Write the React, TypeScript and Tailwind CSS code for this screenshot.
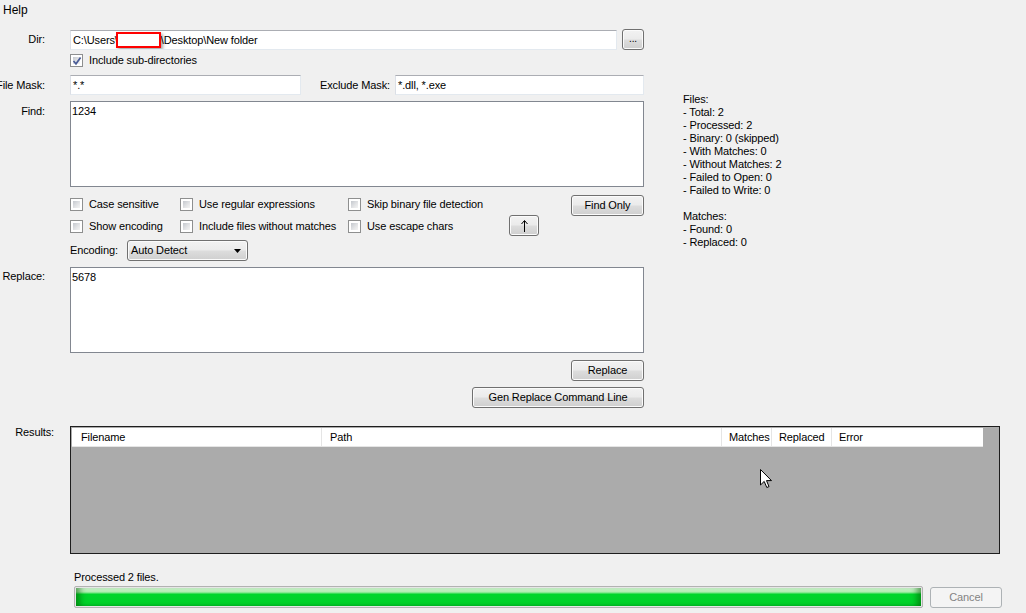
import React from "react";

const Check = ({ checked = false }: { checked?: boolean }) => (
  <span className="relative inline-flex w-[13px] h-[13px] shrink-0 border border-[#8e8f8f] bg-white p-[2px]">
    <span className="block w-full h-full bg-[linear-gradient(135deg,#c4c8ce_0%,#e4e5e7_60%,#f4f4f4_100%)]" />
    {checked && (
      <svg className="absolute left-[1px] top-[1px]" width="10" height="10" viewBox="0 0 10 10">
        <path d="M1.5 5 L4 7.8 L8.6 1.5" fill="none" stroke="#4a5c97" strokeWidth="1.7" />
      </svg>
    )}
  </span>
);

const CheckItem = ({ label, w, checked }: { label: string; w?: string; checked?: boolean }) => (
  <div className={`flex items-center gap-[6px] ${w ?? ""}`}>
    <Check checked={checked} />
    <span className="whitespace-nowrap">{label}</span>
  </div>
);

const Btn = ({ children, cls = "" }: { children: React.ReactNode; cls?: string }) => (
  <div
    className={`flex items-center justify-center h-[21px] border border-[#707070] rounded-[3px] bg-[linear-gradient(#f2f2f2_0%,#ebebeb_48%,#dddddd_52%,#cfcfcf_100%)] shadow-[inset_0_0_0_1px_#fbfbfb] whitespace-nowrap ${cls}`}
  >
    {children}
  </div>
);

const Label = ({ text, w = "w-[45px]", cls = "" }: { text: string; w?: string; cls?: string }) => (
  <div className={`${w} shrink-0 flex justify-end whitespace-nowrap ${cls}`}>
    <span>{text}</span>
  </div>
);

const inputCls =
  "h-[20px] bg-white border border-[#e3e9ef] border-t-[#abadb3] border-l-[#dbdfe6] flex items-center pl-[2px] whitespace-nowrap overflow-hidden";

export default function App() {
  const stats = [
    "Files:",
    "- Total: 2",
    "- Processed: 2",
    "- Binary: 0 (skipped)",
    "- With Matches: 0",
    "- Without Matches: 2",
    "- Failed to Open: 0",
    "- Failed to Write: 0",
    "\u00a0",
    "Matches:",
    "- Found: 0",
    "- Replaced: 0",
  ];
  return (
    <div
      className="w-[1026px] h-[613px] overflow-hidden bg-[#f0f0f0] text-black text-[11px] leading-[13px] tracking-[-0.12px]"
      style={{ fontFamily: '"Liberation Sans", Arial, sans-serif' }}
    >
      {/* menu bar */}
      <div className="h-[20px] pl-[3px] text-[12px] leading-[20px] tracking-normal">Help</div>

      {/* top section */}
      <div className="flex">
        <div className="w-[644px] shrink-0 pt-[10px] flex flex-col">
          {/* Dir */}
          <div className="flex items-start">
            <Label text="Dir:" cls="pt-[3px]" />
            <div className="ml-[25px] flex-1 flex items-start">
              <div className={`${inputCls} flex-1`}>
                <span>C:\Users\</span>
                <span className="inline-block ml-[-2px] w-[45px] h-[16px] border-2 border-[#ff0000] bg-white shadow-[2px_2px_3px_rgba(0,0,0,0.35)]" />
                <span>\Desktop\New folder</span>
              </div>
              <Btn cls="ml-[5px] w-[22px] mt-[-1px] text-[10px] leading-[10px] pb-[1px]">...</Btn>
            </div>
          </div>
          {/* include sub dirs */}
          <div className="mt-[4px] ml-[70px]">
            <CheckItem label="Include sub-directories" checked />
          </div>
          {/* File Mask */}
          <div className="mt-[8px] flex items-start">
            <Label text="File Mask:" cls="pt-[4px]" />
            <div className="ml-[25px] flex-1 flex items-start">
              <div className={`${inputCls} w-[231px]`}>*.*</div>
              <div className="ml-[19px] w-[75px] pt-[4px] whitespace-nowrap">Exclude Mask:</div>
              <div className={`${inputCls} flex-1`}>*.dll, *.exe</div>
            </div>
          </div>
          {/* Find */}
          <div className="mt-[6px] flex items-start">
            <Label text="Find:" cls="pt-[4px]" />
            <div className="ml-[25px] flex-1 h-[86px] bg-white border border-[#828790] pl-[1px] pt-[3px]">1234</div>
          </div>
          {/* options */}
          <div className="ml-[70px] mt-[8px] flex flex-col">
            <div className="h-[20px] flex items-start">
              <div className="flex mt-[3px]">
                <CheckItem label="Case sensitive" w="w-[110px]" />
                <CheckItem label="Use regular expressions" w="w-[168px]" />
                <CheckItem label="Skip binary file detection" />
              </div>
              <Btn cls="ml-auto w-[73px]">Find Only</Btn>
            </div>
            <div className="h-[21px] flex items-start">
              <div className="flex mt-[5px]">
                <CheckItem label="Show encoding" w="w-[110px]" />
                <CheckItem label="Include files without matches" w="w-[168px]" />
                <CheckItem label="Use escape chars" w="w-[161px]" />
              </div>
              <Btn cls="w-[30px]">
                <svg width="7" height="12" viewBox="0 0 7 12">
                  <path d="M3.5 1 V12" stroke="#000" strokeWidth="1" fill="none" />
                  <path d="M0.5 4 L3.5 0.5 L6.5 4" stroke="#000" strokeWidth="1" fill="none" />
                </svg>
              </Btn>
            </div>
            <div className="mt-[4px] flex items-center">
              <div className="w-[57px]">Encoding:</div>
              <div className="w-[121px] h-[21px] border border-[#707070] rounded-[3px] bg-[linear-gradient(#f2f2f2_0%,#ebebeb_48%,#dddddd_52%,#cfcfcf_100%)] shadow-[inset_0_0_0_1px_#fbfbfb] flex items-center pl-[3px] pr-[6px]">
                <span className="flex-1">Auto Detect</span>
                <svg width="7" height="4" viewBox="0 0 7 4">
                  <path d="M0 0 H7 L3.5 4 Z" fill="#000" />
                </svg>
              </div>
            </div>
          </div>
          {/* Replace */}
          <div className="mt-[6px] flex items-start">
            <Label text="Replace:" cls="pt-[3px]" />
            <div className="ml-[25px] flex-1 h-[86px] bg-white border border-[#828790] pl-[1px] pt-[3px]">5678</div>
          </div>
          <div className="mt-[7px] flex justify-end">
            <Btn cls="w-[73px]">Replace</Btn>
          </div>
          <div className="mt-[6px] flex justify-end">
            <Btn cls="w-[172px]">Gen Replace Command Line</Btn>
          </div>
        </div>

        {/* stats */}
        <div className="ml-[39px] pt-[73px] flex flex-col">
          {stats.map((s, i) => (
            <div key={i} className="leading-[13px] whitespace-nowrap">
              {s}
            </div>
          ))}
        </div>
      </div>

      {/* results */}
      <div className="mt-[18px] flex items-start">
        <Label text="Results:" w="w-[54px]" cls="pt-[0px]" />
        <div className="relative ml-[16px] w-[930px] h-[128px] border border-[#1e1e1e] bg-[#ababab] pt-px pl-px">
          <div className="w-[911px] h-[19px] bg-white border-b border-[#e5e5e5] flex items-center">
            <div className="w-[250px] h-full border-r border-[#e5e5e5] pl-[9px] flex items-center">Filename</div>
            <div className="w-[400px] h-full border-r border-[#e5e5e5] pl-[8px] flex items-center">Path</div>
            <div className="w-[50px] h-full border-r border-[#e5e5e5] pl-[7px] flex items-center">Matches</div>
            <div className="w-[60px] h-full border-r border-[#e5e5e5] pl-[7px] flex items-center">Replaced</div>
            <div className="flex-1 h-full pl-[7px] flex items-center">Error</div>
          </div>
          <svg className="absolute left-[689px] top-[42px]" width="13" height="20" viewBox="0 0 13 20">
            <path d="M0.5 0.5 L0.5 16 L4.2 12.4 L6.8 18.5 L9 17.6 L6.5 11.6 L11.5 11.6 Z" fill="#fff" stroke="#000" strokeWidth="1" />
          </svg>
        </div>
      </div>

      {/* status */}
      <div className="mt-[17px] ml-[74px] leading-[13px]">Processed 2 files.</div>
      <div className="mt-[2px] flex items-start">
        <div className="ml-[74px] w-[849px] h-[22px] border border-[#b2b2b2] rounded-[2px] bg-[#e6e6e6] p-px">
          <div className="w-full h-full bg-[linear-gradient(to_bottom,#d6f7d6_0%,#b0eeb0_22%,#00d52b_35%,#00d22a_85%,#00bd26_100%)] shadow-[inset_8px_0_6px_-4px_rgba(0,90,0,0.55),inset_-8px_0_6px_-4px_rgba(0,90,0,0.55)]" />
        </div>
        <div className="ml-[7px] mt-[1px] w-[72px] h-[21px] border border-[#adb2b5] rounded-[3px] bg-[#f4f4f4] text-[#838383] flex items-center justify-center">
          Cancel
        </div>
      </div>
    </div>
  );
}
